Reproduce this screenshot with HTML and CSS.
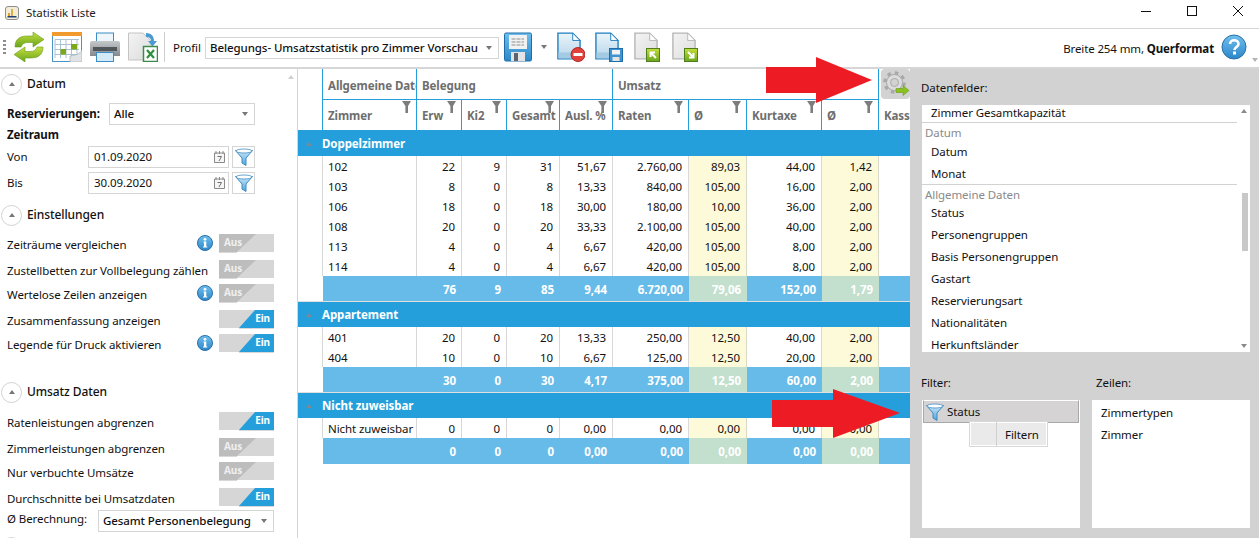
FILE: index.html
```html
<!DOCTYPE html>
<html lang="de">
<head>
<meta charset="utf-8">
<title>Statistik Liste</title>
<link rel="stylesheet" href="styles.css">
</head>
<body>
<svg class="defs" width="0" height="0" aria-hidden="true">
  <defs>
    <linearGradient id="gGreen" x1="0" y1="0" x2="0" y2="1"><stop offset="0" stop-color="#c5de3c"/><stop offset="1" stop-color="#6aa51e"/></linearGradient>
    <linearGradient id="gDoc" x1="0" y1="0" x2="0" y2="1"><stop offset="0" stop-color="#eaf4fa"/><stop offset="1" stop-color="#b5d6ea"/></linearGradient>
    <linearGradient id="gGrey" x1="0" y1="0" x2="1" y2="1"><stop offset="0" stop-color="#f4f4f4"/><stop offset="1" stop-color="#dcdcdc"/></linearGradient>
    <linearGradient id="gBlue" x1="0" y1="0" x2="0" y2="1"><stop offset="0" stop-color="#6fc0ee"/><stop offset="1" stop-color="#2c86c8"/></linearGradient>
    <linearGradient id="gFunnel" x1="0" y1="0" x2="0" y2="1"><stop offset="0" stop-color="#cfe9f8"/><stop offset="1" stop-color="#4aa3dc"/></linearGradient>
    <linearGradient id="gPrint" x1="0" y1="0" x2="0" y2="1"><stop offset="0" stop-color="#c4c8cb"/><stop offset="1" stop-color="#84898d"/></linearGradient>
    <symbol id="funnel" viewBox="0 0 18 18">
      <path d="M.5 2.500h17L11 10v7.500L7 15V10Z" fill="url(#gFunnel)" stroke="#3d8cc4"/>
      <ellipse cx="9" cy="3" rx="8" ry="2" fill="#fff" stroke="#3d8cc4" stroke-width=".8"/>
    </symbol>
    <symbol id="colfilter" viewBox="0 0 9 12">
      <path d="M0 0h9L6 5v7H3.400V5Z" fill="#7d7d7d"/>
    </symbol>
    <symbol id="cal" viewBox="0 0 11 12">
      <path d="M.5 2h10v9.500H.5Z" fill="#f6f6f6" stroke="#8a8a8a"/>
      <path d="M2 0v3M5.500 0v3M9 0v3" stroke="#8a8a8a"/>
      <path d="M3.500 5.500h4L5 10" fill="none" stroke="#707070"/>
    </symbol>
    <symbol id="info" viewBox="0 0 16 16">
      <circle cx="8" cy="8" r="7.500" fill="url(#gBlue)" stroke="#2a6fa8"/>
      <circle cx="8" cy="4.300" r="1.400" fill="#fff"/>
      <path d="M6.500 6.500H9.300V11.500H10.300V12.500H6V11.500H7V7.500H6.500Z" fill="#fff"/>
    </symbol>
    <symbol id="doc" viewBox="0 0 26 30">
      <path d="M1 1H17L25 9V29H1Z" fill="url(#gDoc)" stroke="#1f7fc0" stroke-width="1.500"/>
      <path d="M1.500 22H24.500V28.500H1.500Z" fill="#a3cce4"/>
      <path d="M17 1V9H25Z" fill="#fff" stroke="#1f7fc0"/>
    </symbol>
    <symbol id="docgrey" viewBox="0 0 26 30">
      <path d="M1 1H17L25 9V29H1Z" fill="url(#gGrey)" stroke="#b5b5b5" stroke-width="1.500"/>
      <path d="M17 1V9H25Z" fill="#fff" stroke="#b5b5b5"/>
    </symbol>
    <symbol id="sq" viewBox="0 0 14 14">
      <rect x=".5" y=".5" width="13" height="13" fill="url(#gGreen)" stroke="#4f7f1c"/>
    </symbol>
  </defs>
</svg>

<div class="app">
  <header class="titlebar">
    <svg class="appicon" viewBox="0 0 14 14" width="14" height="14"><rect x=".5" y=".5" width="13" height="13" rx="2.500" fill="#f3edd8" stroke="#8e8e8e"/><rect x="3" y="7" width="2" height="3" fill="#e0a030"/><rect x="6" y="3" width="2" height="7" fill="#d9b04a"/><rect x="2.500" y="10" width="9" height="1.500" fill="#1f3f70"/></svg>
    <span class="title">Statistik Liste</span>
    <div class="winctl">
      <svg class="wc" viewBox="0 0 46 28" width="46" height="28"><path d="M18 11.500h10" stroke="#111" fill="none"/></svg>
      <svg class="wc" viewBox="0 0 46 28" width="46" height="28"><rect x="18.500" y="6.500" width="9" height="9" fill="none" stroke="#111"/></svg>
      <svg class="wc" viewBox="0 0 46 28" width="46" height="28"><path d="M18 6l10 10M28 6L18 16" stroke="#111" fill="none"/></svg>
    </div>
  </header>

  <div class="toolbar">
    <span class="grip"></span>
    <svg class="tool" viewBox="0 0 30 30" width="30" height="30">
      <path d="M1 15C1 7 6 4 13 4H19V0L30 7.500 19 15V10.500H14C10 10.500 8 12 7 15Z" fill="url(#gGreen)" stroke="#6b9c1e" stroke-width=".6"/>
      <path d="M29 15C29 23 24 26 17 26H11V30L0 22.500 11 15V19.500H16C20 19.500 22 18 23 15Z" fill="url(#gGreen)" stroke="#6b9c1e" stroke-width=".6"/>
    </svg>
    <svg class="tool" viewBox="0 0 30 30" width="30" height="30">
      <rect x=".5" y="1.500" width="29" height="28" fill="#fff" stroke="#4a93c4"/>
      <rect x="0" y="0" width="30" height="4" fill="#f29a2e"/>
      <path d="M3 7.500H27M3 12.500H27M3 17.500H27M3 22.500H27M3 7.500V26M8.500 7.500V26M14 7.500V26M19.500 7.500V26M25 7.500V22" stroke="#a9c3d4" fill="none"/>
      <rect x="8.500" y="17" width="5.500" height="5.500" fill="#7da818"/><rect x="19" y="12" width="6" height="5.500" fill="#7da818"/>
      <path d="M18 30L30 30V18C28 22 24 23 18 24Z" fill="#dfe3e6" stroke="#9aa5ab" stroke-width=".6"/>
    </svg>
    <svg class="tool" viewBox="0 0 30 30" width="30" height="30">
      <rect x="6.500" y="1" width="17" height="11" fill="#eef6fb" stroke="#3d8cc4"/>
      <path d="M2 9H28Q30 9 30 11V24H0V11Q0 9 2 9Z" fill="url(#gPrint)"/>
      <rect x="3" y="15" width="24" height="4" fill="#50565a"/>
      <rect x="6.500" y="20.500" width="17" height="9" fill="#d5eaf7" stroke="#3d8cc4"/>
    </svg>
    <svg class="tool" viewBox="0 0 30 30" width="30" height="30">
      <path d="M.5 1H15L23 9V28H.5Z" fill="url(#gGrey)" stroke="#c4c4c4"/>
      <path d="M18 1C24 1 26 5 26 9H29L24.500 14.500 20 9H23C23 6 21 5 18 5Z" fill="#4a9ad4"/>
      <rect x="15.500" y="14.500" width="14" height="15" fill="#fff" stroke="#3f8a4a" stroke-width="1.500"/>
      <path d="M19 18l7 8M26 18l-7 8" stroke="#2f8f3f" stroke-width="2.200"/>
    </svg>
    <span class="sep"></span>
    <span class="profil-label">Profil</span>
    <div class="select select-profil"><span>Belegungs- Umsatzstatistik pro Zimmer Vorschau</span><i class="caret"></i></div>
    <svg class="tool-save" viewBox="0 0 28 30" width="28" height="30">
      <path d="M2 1H26Q27.500 1 27.500 2.500V27.500Q27.500 29 26 29H2Q.5 29 .5 27.500V2.500Q.5 1 2 1Z" fill="url(#gBlue)" stroke="#1f6da8"/>
      <rect x="5" y="3" width="18" height="14" fill="#f2f2f2"/>
      <path d="M7.500 7H20M7.500 10H20M7.500 13H20" stroke="#8f8f8f" stroke-dasharray="4 1"/>
      <rect x="7" y="20" width="14" height="9" fill="#e4e4e4"/><rect x="10" y="21" width="4" height="8" fill="#5b6770"/>
    </svg>
    <i class="caret caret-save"></i>
    <svg class="tool-doc1" viewBox="0 0 28 30" width="28" height="30"><use href="#doc" width="24" height="28"/><circle cx="21" cy="22.500" r="7" fill="#e0413a" stroke="#b32a25"/><rect x="16.500" y="21" width="9" height="3" fill="#fff"/></svg>
    <svg class="tool-doc" viewBox="0 0 28 30" width="28" height="30"><use href="#doc" width="24" height="28"/><rect x="14.500" y="16.500" width="13" height="13" fill="#3f93d0" stroke="#1f6da8"/><rect x="17" y="18" width="8" height="4.500" fill="#f2f2f2"/><rect x="17.500" y="25" width="7" height="4" fill="#e4e4e4"/></svg>
    <svg class="tool-imp" viewBox="0 0 26 30" width="26" height="30"><use href="#docgrey" width="24" height="28"/><use href="#sq" x="12" y="16" width="14" height="14"/><path d="M22 26L16.500 20.500M16.500 25V20.500H21" stroke="#fff" stroke-width="2" fill="none"/></svg>
    <svg class="tool-exp" viewBox="0 0 26 30" width="26" height="30"><use href="#docgrey" width="24" height="28"/><use href="#sq" x="12" y="16" width="14" height="14"/><path d="M16 20L21.500 25.500M21.500 21V25.500H17" stroke="#fff" stroke-width="2" fill="none"/></svg>
    <span class="format">Breite 254 mm, <b>Querformat</b></span>
    <svg class="help" viewBox="0 0 26 26" width="26" height="26"><circle cx="13" cy="13" r="12" fill="url(#gBlue)" stroke="#2a6fa8"/><path d="M9 10C9 5 17.500 5 17.500 10C17.500 13 13.500 13 13.500 16" fill="none" stroke="#fff" stroke-width="2.600"/><rect x="12" y="17.500" width="3" height="3" fill="#fff"/></svg>
    <i class="caret caret-end"></i>
  </div>

  <main class="body">
    <aside class="side">
      <i class="scroll-up"></i>
      <div class="sect sect-first"><span class="circle"><i></i></span><span>Datum</span></div>
      <div class="res-row"><b class="res-label">Reservierungen:</b><div class="select select-res"><span>Alle</span><i class="caret"></i></div></div>
      <div class="zeitraum">Zeitraum</div>
      <div class="date-row"><span class="date-label">Von</span><div class="date"><span>01.09.2020</span><svg width="11" height="12"><use href="#cal"/></svg></div><div class="fbtn"><svg width="18" height="18"><use href="#funnel"/></svg></div></div>
      <div class="date-row date-row-2"><span class="date-label">Bis</span><div class="date"><span>30.09.2020</span><svg width="11" height="12"><use href="#cal"/></svg></div><div class="fbtn"><svg width="18" height="18"><use href="#funnel"/></svg></div></div>

      <div class="sect sect-einst"><span class="circle"><i></i></span><span>Einstellungen</span></div>
      <div class="toggles toggles-1">
        <div class="trow"><span class="tlabel">Zeiträume vergleichen</span><svg class="info" width="16" height="16"><use href="#info"/></svg><span class="toggle off">Aus</span></div>
        <div class="trow"><span class="tlabel">Zustellbetten zur Vollbelegung zählen</span><span class="toggle off">Aus</span></div>
        <div class="trow"><span class="tlabel">Wertelose Zeilen anzeigen</span><svg class="info" width="16" height="16"><use href="#info"/></svg><span class="toggle off">Aus</span></div>
        <div class="trow"><span class="tlabel">Zusammenfassung anzeigen</span><span class="toggle on">Ein</span></div>
        <div class="trow"><span class="tlabel">Legende für Druck aktivieren</span><svg class="info" width="16" height="16"><use href="#info"/></svg><span class="toggle on">Ein</span></div>
      </div>

      <div class="sect sect-umsatz"><span class="circle"><i></i></span><span>Umsatz Daten</span></div>
      <div class="toggles toggles-2">
        <div class="trow"><span class="tlabel">Ratenleistungen abgrenzen</span><span class="toggle on">Ein</span></div>
        <div class="trow"><span class="tlabel">Zimmerleistungen abgrenzen</span><span class="toggle off">Aus</span></div>
        <div class="trow"><span class="tlabel">Nur verbuchte Umsätze</span><span class="toggle off">Aus</span></div>
        <div class="trow"><span class="tlabel">Durchschnitte bei Umsatzdaten</span><span class="toggle on">Ein</span></div>
      </div>
      <div class="avg-row"><span class="avg-label">Ø Berechnung:</span><div class="select select-avg"><span>Gesamt Personenbelegung</span><i class="caret"></i></div></div>
      <div class="sect sect-last"><span class="circle"><i></i></span></div>
    </aside>

    <section class="table">
      <div class="band grid">
        <span class="h-ind"></span>
        <span class="bcell">Allgemeine Daten</span>
        <span class="bcell span4">Belegung</span>
        <span class="bcell span4">Umsatz</span>
        <span class="gear">
          <svg viewBox="0 0 26 26" width="26" height="26"><circle cx="11.500" cy="11.500" r="9.500" fill="none" stroke="#a8a8a8" stroke-width="3.500" stroke-dasharray="3.500 3.960"/><circle cx="11.500" cy="11.500" r="8" fill="#dcdcdc" stroke="#a8a8a8"/><circle cx="11.500" cy="11.500" r="4" fill="#d2d2d2" stroke="#a8a8a8"/><path d="M13 17.500H20V14.500L26 19.500 20 24.500V21.500H13Z" fill="#8cc21e" stroke="#5f8f14" stroke-width=".5"/></svg>
        </span>
      </div>
      <div class="colhead grid">
        <span class="h-ind"></span>
        <span class="hc">Zimmer<svg class="cf" width="9" height="12"><use href="#colfilter"/></svg></span>
        <span class="hc">Erw<svg class="cf" width="9" height="12"><use href="#colfilter"/></svg></span>
        <span class="hc">Ki2<svg class="cf" width="9" height="12"><use href="#colfilter"/></svg></span>
        <span class="hc">Gesamt<svg class="cf" width="9" height="12"><use href="#colfilter"/></svg></span>
        <span class="hc">Ausl. %<svg class="cf" width="9" height="12"><use href="#colfilter"/></svg></span>
        <span class="hc">Raten<svg class="cf" width="9" height="12"><use href="#colfilter"/></svg></span>
        <span class="hc">Ø<svg class="cf" width="9" height="12"><use href="#colfilter"/></svg></span>
        <span class="hc">Kurtaxe<svg class="cf" width="9" height="12"><use href="#colfilter"/></svg></span>
        <span class="hc">Ø<svg class="cf" width="9" height="12"><use href="#colfilter"/></svg></span>
        <span class="hc hc-last">Kasse</span>
      </div>

      <div class="group"><i class="gcaret"></i><span>Doppelzimmer</span></div>
      <div class="tr grid"><span></span><span class="n">102</span><span>22</span><span>9</span><span>31</span><span>51,67</span><span>2.760,00</span><span class="y">89,03</span><span>44,00</span><span class="y">1,42</span><span></span></div>
      <div class="tr grid"><span></span><span class="n">103</span><span>8</span><span>0</span><span>8</span><span>13,33</span><span>840,00</span><span class="y">105,00</span><span>16,00</span><span class="y">2,00</span><span></span></div>
      <div class="tr grid"><span></span><span class="n">106</span><span>18</span><span>0</span><span>18</span><span>30,00</span><span>180,00</span><span class="y">10,00</span><span>36,00</span><span class="y">2,00</span><span></span></div>
      <div class="tr grid"><span></span><span class="n">108</span><span>20</span><span>0</span><span>20</span><span>33,33</span><span>2.100,00</span><span class="y">105,00</span><span>40,00</span><span class="y">2,00</span><span></span></div>
      <div class="tr grid"><span></span><span class="n">113</span><span>4</span><span>0</span><span>4</span><span>6,67</span><span>420,00</span><span class="y">105,00</span><span>8,00</span><span class="y">2,00</span><span></span></div>
      <div class="tr grid"><span></span><span class="n">114</span><span>4</span><span>0</span><span>4</span><span>6,67</span><span>420,00</span><span class="y">105,00</span><span>8,00</span><span class="y">2,00</span><span></span></div>
      <div class="sum grid"><span class="blank"></span><span></span><span>76</span><span>9</span><span>85</span><span>9,44</span><span>6.720,00</span><span class="g">79,06</span><span>152,00</span><span class="g">1,79</span><span></span></div>

      <div class="group"><i class="gcaret"></i><span>Appartement</span></div>
      <div class="tr grid"><span></span><span class="n">401</span><span>20</span><span>0</span><span>20</span><span>13,33</span><span>250,00</span><span class="y">12,50</span><span>40,00</span><span class="y">2,00</span><span></span></div>
      <div class="tr grid"><span></span><span class="n">404</span><span>10</span><span>0</span><span>10</span><span>6,67</span><span>125,00</span><span class="y">12,50</span><span>20,00</span><span class="y">2,00</span><span></span></div>
      <div class="sum grid"><span class="blank"></span><span></span><span>30</span><span>0</span><span>30</span><span>4,17</span><span>375,00</span><span class="g">12,50</span><span>60,00</span><span class="g">2,00</span><span></span></div>

      <div class="group"><i class="gcaret"></i><span>Nicht zuweisbar</span></div>
      <div class="tr grid"><span></span><span class="n">Nicht zuweisbar</span><span>0</span><span>0</span><span>0</span><span>0,00</span><span>0,00</span><span class="y">0,00</span><span>0,00</span><span class="y">0,00</span><span></span></div>
      <div class="sum grid"><span class="blank"></span><span></span><span>0</span><span>0</span><span>0</span><span>0,00</span><span>0,00</span><span class="g">0,00</span><span>0,00</span><span class="g">0,00</span><span></span></div>
    </section>

    <aside class="fields">
      <div class="flabel">Datenfelder:</div>
      <div class="fieldlist">
        <div class="fi fi-top">Zimmer Gesamtkapazität</div>
        <div class="fh">Datum</div>
        <div class="fi">Datum</div>
        <div class="fi fi-end">Monat</div>
        <div class="fh fh-2">Allgemeine Daten</div>
        <div class="fi">Status</div>
        <div class="fi">Personengruppen</div>
        <div class="fi">Basis Personengruppen</div>
        <div class="fi">Gastart</div>
        <div class="fi">Reservierungsart</div>
        <div class="fi">Nationalitäten</div>
        <div class="fi">Herkunftsländer</div>
        <i class="sb-up"></i><i class="sb-thumb"></i><i class="sb-down"></i>
      </div>
      <div class="lower">
        <div class="lcol">
          <div class="flabel2">Filter:</div>
          <div class="box box-filter">
            <div class="status"><svg width="18" height="18"><use href="#funnel"/></svg><span>Status</span></div>
            <div class="popup"><span class="pop-empty"></span><span class="pop-text">Filtern</span></div>
          </div>
        </div>
        <div class="lcol">
          <div class="flabel2 flabel-rows">Zeilen:</div>
          <div class="box box-rows"><div class="ri">Zimmertypen</div><div class="ri">Zimmer</div></div>
        </div>
      </div>
    </aside>
  </main>

  <svg class="arrow arrow-1" viewBox="0 0 106 46" width="106" height="46"><path d="M0 10H50V0L106 23 50 46V36H0Z" fill="#ed1c24"/></svg>
  <svg class="arrow arrow-2" viewBox="0 0 128 49" width="128" height="49"><path d="M0 11H61V0L128 24 61 49V38H0Z" fill="#ed1c24"/></svg>
</div>
</body>
</html>
```

FILE: styles.css
```css
* { box-sizing: border-box; }
html, body { margin: 0; padding: 0; }
body {
  width: 1259px;
  height: 538px;
  overflow: hidden;
  background: #fff;
  color: #111;
  font: 11.500px/16px "Noto Sans", "Open Sans", sans-serif;
  letter-spacing: -.08px;
}
.defs { position: absolute; }
.app { position: relative; width: 1259px; height: 538px; overflow: hidden; }

/* title bar */
.titlebar { display: flex; align-items: center; height: 29px; padding: 0 0 2px 5px; border-bottom: 1px solid #d6d6d6; }
.appicon { margin-right: 7px; }
.title { color: #222; }
.winctl { display: flex; margin-left: auto; margin-right: -2px; }
.wc { display: block; margin-top: 2px; }

/* toolbar */
.toolbar { display: flex; align-items: center; height: 40px; padding: 0 0 2px 3px; border-bottom: 2px solid #d6d6d6; }
.grip { width: 3px; height: 14px; margin-right: 8px; background: repeating-linear-gradient(#8c8c8c 0 2px, transparent 2px 4px); }
.tool { margin-right: 8px; flex: none; }
.sep { width: 1px; height: 30px; margin-left: -2px; background: #cfcfcf; }
.profil-label { width: 32px; margin: 2px 0 0 8px; }
.select { display: flex; align-items: center; justify-content: space-between; border: 1px solid #d5d5d5; background: #fff; padding: 0 6px 0 4px; white-space: nowrap; }
.select-profil { flex: none; width: 294px; height: 22px; margin-top: 2px; font-weight: 500; }
.caret { display: inline-block; flex: none; width: 0; height: 0; border-left: 3.500px solid transparent; border-right: 3.500px solid transparent; border-top: 4px solid #777; }
.tool-save { margin-left: 5px; flex: none; }
.caret-save { margin-left: 9px; }
.tool-doc1 { margin-left: 10px; flex: none; }
.tool-doc { margin-left: 10px; flex: none; }
.tool-imp { margin-left: 11px; flex: none; }
.tool-exp { margin-left: 12px; flex: none; }
.format { margin: 4px 0 0 auto; letter-spacing: -.12px; }
.format b { font-weight: 700; }
.help { margin: 0 0 0 7px; }
.caret-end { align-self: flex-end; margin: 0 1px 3px 5px; border-top-color: #b5b5b5; }

/* body */
.body { display: flex; height: 469px; }

/* left panel */
.side { position: relative; width: 298px; flex: none; height: 469px; overflow: hidden; border-right: 1px solid #d4d4d4; padding-left: 7px; }
.scroll-up { position: absolute; left: 288px; top: 6px; width: 0; height: 0; border-left: 3.500px solid transparent; border-right: 3.500px solid transparent; border-bottom: 4px solid #d0d0d0; }
.sect { display: flex; align-items: center; gap: 5px; height: 22px; margin-left: -6px; font-size: 12px; font-weight: 500; }
.sect-first { margin-top: 4px; }
.sect-einst { margin-top: 10px; }
.sect-umsatz { margin-top: 29px; }
.sect-last { margin-top: 4px; }
.circle { display: flex; align-items: center; justify-content: center; width: 21px; height: 21px; border: 1px solid #d2d2d2; border-radius: 50%; flex: none; }
.circle i { width: 0; height: 0; border-left: 3px solid transparent; border-right: 3px solid transparent; border-bottom: 4px solid #777; }
.res-row { display: flex; align-items: center; height: 21px; margin-top: 8px; }
.res-label { font-weight: 700; width: 102px; }
.select-res { width: 146px; height: 22px; font-weight: 500; }
.zeitraum { height: 20px; margin-top: 1px; font-weight: 700; line-height: 20px; }
.date-row { display: flex; align-items: center; height: 22px; margin-top: 1px; }
.date-row-2 { margin-top: 4px; }
.date-label { width: 81px; }
.date { display: flex; align-items: center; justify-content: space-between; width: 141px; height: 22px; border: 1px solid #d5d5d5; padding: 0 3px 0 5px; }
.fbtn { display: flex; align-items: center; justify-content: center; width: 23px; height: 22px; margin-left: 3px; border: 1px solid #d5d5d5; }
.toggles { display: flex; flex-direction: column; }
.toggles-1 { margin-top: 8px; }
.toggles-2 { margin-top: 9px; }
.trow { display: flex; align-items: center; height: 18px; }
.trow:nth-child(odd) { margin-bottom: 8px; }
.trow:nth-child(even) { margin-bottom: 6px; }
.toggles-2 .trow:last-child { margin-bottom: 4px; }
.toggles-1 .trow:last-child { margin-bottom: 0; }
.tlabel { padding-top: 3px; white-space: nowrap; }
.info { margin-left: auto; margin-right: 6px; flex: none; }
.toggle { position: relative; isolation: isolate; display: block; width: 55px; height: 18px; margin-left: auto; margin-right: 23px; background: #d6d6d6; font-size: 10px; font-weight: 700; line-height: 17px; flex: none; }
.info + .toggle { margin-left: 0; }
.toggle::before { content: ""; position: absolute; inset: 0; z-index: -1; }
.toggle::after { content: ""; position: absolute; top: 18px; height: 1px; background: #d8d8d8; }
.toggle.off { color: #efefef; padding-left: 5px; }
.toggle.off::before { background: #bdbdbd; clip-path: polygon(0 0, 37px 0, 18px 100%, 0 100%); }
.toggle.off::after { left: 0; width: 18px; }
.toggle.on { color: #fff; text-align: right; padding-right: 4px; }
.toggle.on::before { background: #259fdb; clip-path: polygon(36px 0, 100% 0, 100% 100%, 20px 100%); }
.toggle.on::after { left: 20px; right: 0; }
.avg-row { display: flex; align-items: flex-start; height: 22px; }
.avg-label { width: 91px; padding-top: 1px; }
.select-avg { width: 176px; height: 22px; font-weight: 500; }

/* table */
.table { position: relative; width: 612px; flex: none; overflow: hidden; }
.grid { display: grid; grid-template-columns: 25px 94px 45px 45px 53px 53px 76px 58px 75px 57px 31px; }
.band { height: 31px; }
.h-ind { border-right: 1px solid #259fdb; }
.bcell { display: flex; align-items: center; height: 31px; padding: 3px 0 0 5px; border-right: 1px solid #259fdb; border-bottom: 1px solid #259fdb; color: #6e6e6e; font-weight: 700; white-space: nowrap; overflow: hidden; }
.span4 { grid-column: span 4; }
.gear { display: flex; align-items: center; justify-content: center; width: 29px; height: 30px; margin-left: 2px; background: #d2d2d2; border-radius: 4px; }
.colhead { height: 31px; border-bottom: 1px solid #259fdb; }
.hc { position: relative; display: flex; align-items: center; padding: 2px 0 0 5px; border-right: 1px solid #259fdb; color: #6e6e6e; font-weight: 700; white-space: nowrap; overflow: hidden; }
.hc-last { border-right: 0; }
.cf { position: absolute; right: 5px; top: 1px; }
.group { display: flex; align-items: center; height: 25px; padding: 0 0 0 8px; background: #259fdb; color: #fff; font-weight: 700; }
.gcaret { width: 0; height: 0; margin-right: 10px; border-left: 3.500px solid transparent; border-right: 3.500px solid transparent; border-bottom: 4px solid #7d8a92; }
.tr { height: 20px; line-height: 21px; }
.tr > span { text-align: right; padding-right: 6px; border-right: 1px solid #d8d8d8; white-space: nowrap; overflow: hidden; }
.tr > span:first-child { padding: 0; }
.tr > span:last-child { border-right: 0; }
.tr > .n { text-align: left; padding-left: 5px; }
.tr > .y { background: #fdfad9; border-right-color: #d9d9c8; }
.sum { height: 26px; line-height: 27px; color: #fff; font-weight: 700; border-bottom: 1px solid #e0e0e0; }
.sum:last-child { border-bottom: 0; }
.sum > span { height: 25px; text-align: right; padding-right: 6px; background: #67bbe8; }
.sum:last-child > span { height: 26px; }
.sum > .blank { background: #fff; }
.sum > .g { background: #c3dfcd; }

/* right panel */
.fields { width: 349px; flex: none; background: #d2d2d2; padding: 9px 9px 0 12px; height: 469px; }
.flabel { height: 20px; margin: 0 0 7px -1px; line-height: 20px; }
.fieldlist { position: relative; height: 247px; background: #fff; overflow: hidden; }
.fi { height: 22px; padding-left: 9px; line-height: 22px; }
.fi-top { height: 18px; line-height: 16px; margin-right: 13px; border-bottom: 1px solid #d2d2d2; }
.fi-end { height: 22px; margin-right: 13px; border-bottom: 1px solid #d2d2d2; }
.fh { height: 18px; padding-left: 3px; line-height: 20px; color: #8a8a8a; }
.fh-2 { height: 17px; }
.sb-up, .sb-down { position: absolute; left: 319px; width: 0; height: 0; border-left: 3.500px solid transparent; border-right: 3.500px solid transparent; }
.sb-up { top: 4px; border-bottom: 4px solid #8a8a8a; }
.sb-down { bottom: 4px; border-top: 4px solid #8a8a8a; }
.sb-thumb { position: absolute; left: 320px; top: 88px; width: 6px; height: 58px; background: #c8c8c8; }
.lower { display: flex; gap: 12px; margin-top: 21px; }
.lcol { width: 158px; }
.flabel2 { height: 20px; margin: 0 0 7px -1px; line-height: 20px; }
.flabel-rows { margin-left: 4px; }
.box { position: relative; width: 158px; height: 128px; background: #fff; }
.status { display: flex; align-items: center; gap: 3px; height: 23px; margin: 0 1px; padding-left: 2px; background: #d5d3d3; border: 1px solid #a8a8a8; border-top-color: #fff; }
.popup { position: absolute; left: 47px; top: 21px; display: flex; width: 79px; height: 26px; border: 1px solid #d8d8d8; background: #eaeaea; box-shadow: inset 0 0 0 1px #fff; }
.pop-empty { width: 27px; border-right: 1px solid #d0d0d0; }
.pop-text { padding-left: 8px; line-height: 25px; }
.box-rows { padding-top: 2px; }
.ri { height: 22px; padding-left: 9px; line-height: 22px; }

/* annotations */
.arrow { position: absolute; }
.arrow-1 { left: 766px; top: 57px; }
.arrow-2 { left: 772px; top: 389px; }
```
